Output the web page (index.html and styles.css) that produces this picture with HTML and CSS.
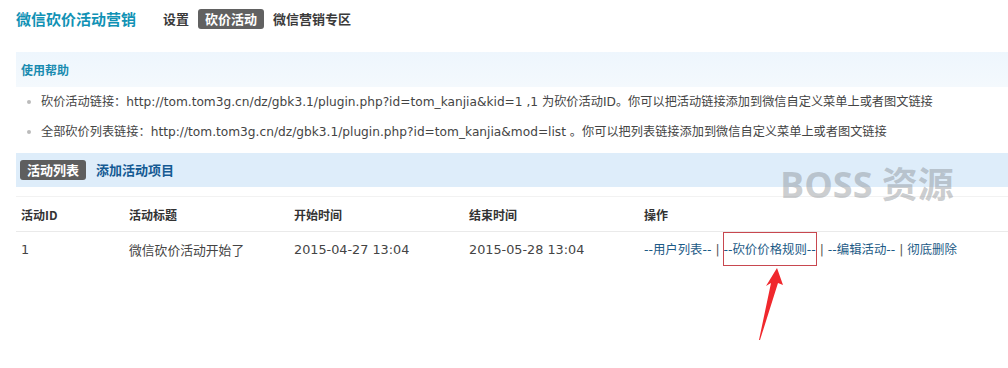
FILE: index.html
```html
<!DOCTYPE html>
<html lang="zh-CN">
<head>
<meta charset="utf-8">
<title>微信砍价活动营销</title>
<link rel="stylesheet" href="styles.css">
</head>
<body>
<div class="page">
  <div class="topbar">
    <h1 class="apptitle">微信砍价活动营销</h1>
    <ul class="tabs">
      <li class="tab">设置</li>
      <li class="tab active">砍价活动</li>
      <li class="tab">微信营销专区</li>
    </ul>
  </div>

  <div class="helpbar"><span class="helptitle">使用帮助</span></div>
  <ul class="tips">
    <li>砍价活动链接：http://tom.tom3g.cn/dz/gbk3.1/plugin.php?id=tom_kanjia&amp;kid=1 ,1 为砍价活动ID。你可以把活动链接添加到微信自定义菜单上或者图文链接</li>
    <li>全部砍价列表链接：http://tom.tom3g.cn/dz/gbk3.1/plugin.php?id=tom_kanjia&amp;mod=list 。你可以把列表链接添加到微信自定义菜单上或者图文链接</li>
  </ul>

  <div class="subbar">
    <span class="subtab active">活动列表</span>
    <a class="subtab link" href="#">添加活动项目</a>
  </div>

  <table class="list">
    <thead>
      <tr>
        <th class="c1">活动ID</th>
        <th class="c2">活动标题</th>
        <th class="c3">开始时间</th>
        <th class="c4">结束时间</th>
        <th>操作</th>
      </tr>
    </thead>
    <tbody>
      <tr>
        <td>1</td>
        <td>微信砍价活动开始了</td>
        <td>2015-04-27 13:04</td>
        <td>2015-05-28 13:04</td>
        <td class="ops"><a href="#">--用户列表--</a> | <a href="#" class="marked">--砍价价格规则--</a> | <a href="#">--编辑活动--</a> | <a href="#">彻底删除</a></td>
      </tr>
    </tbody>
  </table>

  <div class="watermark">BOSS 资源</div>
  <svg class="arrow" width="40" height="80" viewBox="0 0 40 80">
    <polygon points="25,0 31,17 26,15 8,72 7,72 19,15 14,18" fill="#f0282d"/>
  </svg>
</div>
</body>
</html>
```

FILE: styles.css
```css
* { box-sizing: border-box; }
html, body { margin: 0; padding: 0; background: #fff; }
body {
  font-family: Tahoma, "DejaVu Sans", "Noto Sans CJK SC", sans-serif;
  font-size: 12px;
  color: #333;
}
.page {
  position: relative;
  width: 1008px;
  height: 368px;
  overflow: hidden;
  padding-left: 16px;
}
.topbar {
  display: flex;
  align-items: center;
  height: 37px;
}
.apptitle {
  margin: 0;
  font-size: 15px;
  font-weight: bold;
  color: #1192b5;
  font-family: "Noto Sans CJK SC", sans-serif;
}
.tabs {
  display: flex;
  list-style: none;
  margin: 0 0 0 20px;
  padding: 0;
  gap: 2px;
  font-family: "Noto Sans CJK SC", sans-serif;
  font-weight: bold;
}
.tab {
  font-size: 13px;
  color: #3a3a3a;
  padding: 0 7px;
  line-height: 20px;
  border-radius: 3px;
}
.tab.active {
  background: #616161;
  color: #fff;
}
.helpbar {
  margin-top: 15px;
  height: 35px;
  display: flex;
  align-items: center;
  padding-left: 5px;
  background: linear-gradient(#eef6fd, #f4f9fd);
}
.helptitle {
  font-family: "Noto Sans CJK SC", sans-serif;
  font-weight: bold;
  font-size: 12px;
  color: #1a8bb0;
}
.tips {
  list-style: none;
  margin: 0;
  padding: 0;
  font-family: "DejaVu Sans", "Noto Sans CJK SC", sans-serif;
  font-size: 12.2px;
  color: #444;
}
.tips li {
  position: relative;
  height: 30px;
  line-height: 30px;
  padding-left: 25px;
  white-space: nowrap;
}
.tips li::before {
  content: "";
  position: absolute;
  left: 11px;
  top: 13px;
  width: 4px;
  height: 4px;
  border-radius: 50%;
  background: #bbb;
}
.subbar {
  margin-top: 6px;
  height: 34px;
  background: #deedfa;
  display: flex;
  align-items: center;
  padding-left: 4px;
  gap: 10px;
  font-family: "Noto Sans CJK SC", sans-serif;
  font-weight: bold;
}
.subtab {
  font-size: 13px;
  line-height: 20px;
  padding: 0 7px;
  border-radius: 3px;
}
.subtab.active { background: #5e5e5e; color: #fff; }
.subtab.link { color: #145a93; text-decoration: none; padding: 0; }
.list {
  margin-top: 9px;
  width: 992px;
  border-collapse: collapse;
  font-size: 12px;
}
.list th, .list td {
  text-align: left;
  padding: 0 0 0 5px;
  height: 35px;
  white-space: nowrap;
}
.list th {
  font-family: "Noto Sans CJK SC", sans-serif;
  font-weight: bold;
  color: #333;
  border-top: 1px solid #f2f2f2;
  border-bottom: 1px solid #eaeaea;
}
.list td {
  font-family: "DejaVu Sans", "Noto Sans CJK SC", sans-serif;
  font-size: 12.8px;
  color: #444;
  height: 32px;
}
.list .c1 { width: 108px; }
.list .c2 { width: 165px; }
.list .c3 { width: 175px; }
.list .c4 { width: 175px; }
.list td.ops { color: #555; font-size: 12.4px; }
.ops a { color: #1c5a86; text-decoration: none; }
.ops a.marked {
  display: inline-block;
  border: 1px solid #c8474f;
  padding: 7px 0;
  margin: 0 -1px;
}
.watermark {
  position: absolute;
  left: 780px;
  top: 156px;
  font-family: "Open Sans", "Noto Sans CJK SC", sans-serif;
  font-weight: bold;
  font-size: 36px;
  color: rgba(130, 135, 140, 0.42);
}
.arrow {
  position: absolute;
  left: 752px;
  top: 268px;
}
```
